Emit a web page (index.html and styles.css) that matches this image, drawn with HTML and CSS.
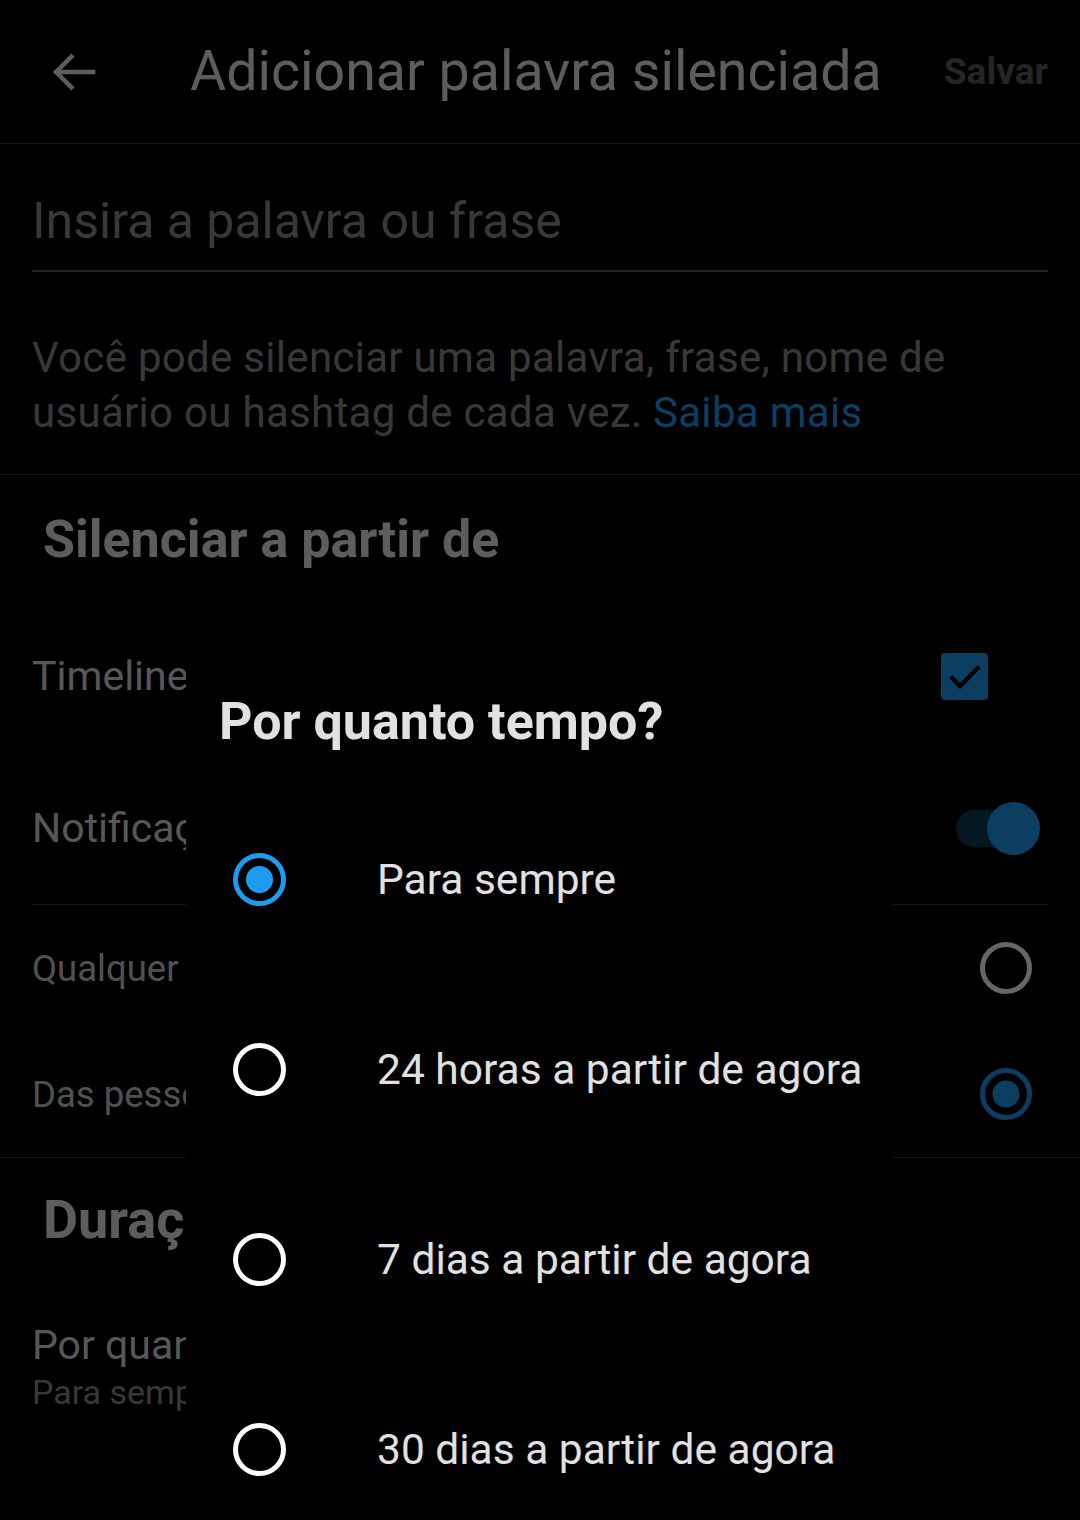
FILE: index.html
```html
<!DOCTYPE html>
<html lang="pt-BR">
<head>
    <meta charset="UTF-8">
    <meta name="viewport" content="width=device-width, initial-scale=1.0">
    <title>Adicionar palavra silenciada</title>
    <link rel="stylesheet" href="styles.css">
</head>
<body>
    <div class="screen">
        <header class="topbar">
            <svg class="back" width="46" height="46" viewBox="3 3 18 18" fill="none" stroke="#e7e9ea" stroke-width="1.7" stroke-linecap="square">
                <path d="M19.5 12H5"/>
                <path d="M11 6l-6 6 6 6"/>
            </svg>
            <h1 class="title">Adicionar palavra silenciada</h1>
            <span class="save">Salvar</span>
        </header>

        <div class="field">Insira a palavra ou frase</div>
        <p class="help"><span>Você pode silenciar uma palavra, frase, nome de usuário ou hashtag de cada vez.</span> <a href="#" class="link">Saiba mais</a></p>

        <section class="group">
            <h2 class="group-title">Silenciar a partir de</h2>
            <div class="row row-tall">
                <span class="row-label">Timeline</span>
                <span class="checkbox">
                    <svg width="40" height="40" viewBox="0 0 24 24" fill="none" stroke="#000" stroke-width="2.6">
                        <path d="M3.5 12.5l5.5 5.5L20.5 6.5"/>
                    </svg>
                </span>
            </div>
            <div class="row row-tall row-line">
                <span class="row-label">Notificações</span>
                <span class="toggle"><span class="knob"></span></span>
            </div>
            <div class="row row-short">
                <span class="row-label small">Qualquer pessoa</span>
                <span class="radio"></span>
            </div>
            <div class="row row-short">
                <span class="row-label small">Das pessoas que você segue</span>
                <span class="radio radio-on"></span>
            </div>
        </section>

        <section class="group group-last">
            <h2 class="group-title big">Duração</h2>
            <div class="duration">
                <div class="duration-label">Por quanto tempo?</div>
                <div class="duration-value">Para sempre</div>
            </div>
        </section>

        <div class="overlay"></div>

        <div class="dialog">
            <h3 class="dialog-title">Por quanto tempo?</h3>
            <div class="option">
                <span class="opt-radio opt-on"></span>
                <span class="opt-text">Para sempre</span>
            </div>
            <div class="option">
                <span class="opt-radio"></span>
                <span class="opt-text">24 horas a partir de agora</span>
            </div>
            <div class="option">
                <span class="opt-radio"></span>
                <span class="opt-text">7 dias a partir de agora</span>
            </div>
            <div class="option">
                <span class="opt-radio"></span>
                <span class="opt-text">30 dias a partir de agora</span>
            </div>
        </div>
    </div>
</body>
</html>
```

FILE: styles.css
```css
body {
    margin: 0;
    background-color: #000;
    font-family: Roboto, "Liberation Sans", sans-serif;
    color: #e7e9ea;
}
.screen {
    position: relative;
    width: 1080px;
    height: 1520px;
    overflow: hidden;
}
.topbar {
    display: flex;
    align-items: center;
    height: 143px;
    border-bottom: 1px solid #333;
    padding: 0 32px 0 51px;
}
.back {
    flex: none;
}
.title {
    flex: 1;
    margin: 0 0 0 93px;
    font-size: 55.5px;
    font-weight: 400;
    line-height: 60px;
    color: #e7e9ea;
}
.save {
    font-size: 37px;
    font-weight: 700;
    color: #5c5e60;
}
.field {
    margin: 0 32px;
    padding: 47px 0 19px;
    font-size: 50px;
    line-height: 60px;
    color: #8d8d8d;
    border-bottom: 2px solid #555;
}
.help {
    margin: 0;
    padding: 58px 32px 34px;
    font-size: 42px;
    letter-spacing: 0.3px;
    line-height: 55px;
    color: #8d8d8d;
    border-bottom: 1px solid #3a3a3a;
}
.link {
    color: #1d9bf0;
    text-decoration: none;
}
.group-title {
    margin: 0;
    padding: 35px 43px 30px;
    font-size: 52px;
    font-weight: 700;
    line-height: 60px;
    color: #e7e9ea;
}
.row {
    display: flex;
    align-items: center;
    justify-content: space-between;
    margin: 0 32px;
}
.row-tall {
    height: 152px;
}
.row-line {
    border-bottom: 1px solid #3a3a3a;
}
.row-short {
    height: 126px;
}
.row-label {
    font-size: 41px;
    color: #d9d9d9;
}
.row-label.small {
    font-size: 36.5px;
    color: #c8c8c8;
}
.checkbox {
    display: flex;
    align-items: center;
    justify-content: center;
    width: 47px;
    height: 47px;
    margin-right: 60px;
    border-radius: 4px;
    background-color: #1d9bf0;
}
.toggle {
    position: relative;
    width: 74px;
    height: 37px;
    margin-right: 18px;
    border-radius: 19px;
    background-color: #0e3a52;
}
.knob {
    position: absolute;
    top: -8px;
    right: -10px;
    width: 53px;
    height: 53px;
    border-radius: 50%;
    background-color: #1d9bf0;
}
.radio {
    box-sizing: border-box;
    width: 52px;
    height: 52px;
    margin-right: 16px;
    border: 5px solid #fff;
    border-radius: 50%;
}
.radio-on {
    border-color: #1d9bf0;
    background: radial-gradient(circle, #1d9bf0 0 13px, transparent 14px);
}
.group {
    border-bottom: 1px solid #3a3a3a;
}
.group-last {
    border-bottom: none;
}
.group-title.big {
    padding: 32px 43px 0;
    font-size: 54px;
}
.duration {
    padding: 71px 32px 0;
}
.duration-label {
    font-size: 41px;
    line-height: 48px;
    color: #d9d9d9;
}
.duration-value {
    font-size: 34px;
    line-height: 46px;
    color: #8d8d8d;
}
.overlay {
    position: absolute;
    inset: 0;
    background-color: rgba(0, 0, 0, 0.6);
}
.dialog {
    position: absolute;
    left: 186px;
    top: 640px;
    bottom: -40px;
    width: 707px;
    background-color: #000;
}
.dialog-title {
    margin: 0;
    padding: 52px 33px 32px;
    font-size: 52px;
    font-weight: 700;
    line-height: 60px;
    color: #e1e1e1;
}
.option {
    display: flex;
    align-items: center;
    height: 190px;
    padding-left: 47px;
}
.opt-radio {
    box-sizing: border-box;
    width: 53px;
    height: 53px;
    margin-right: 91px;
    border: 5px solid #fff;
    border-radius: 50%;
}
.opt-on {
    border-color: #1d9bf0;
    background: radial-gradient(circle, #1d9bf0 0 13px, transparent 14px);
}
.opt-text {
    font-size: 42.5px;
    color: #e1e1e1;
}
```
